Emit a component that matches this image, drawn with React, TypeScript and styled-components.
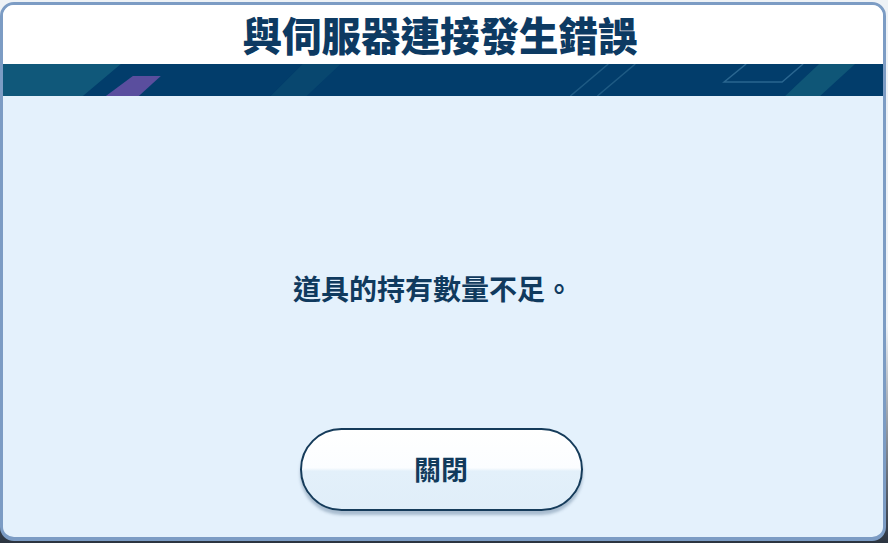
import React from "react";
import styled, {createGlobalStyle} from "styled-components";

const GlobalStyle = createGlobalStyle`
  html, body {
    margin: 0;
    padding: 0;
  }
  body {
    width: 888px;
    height: 543px;
    overflow: hidden;
    background: linear-gradient(#eef2f6 0%, #eef2f6 60%, #2b3440 100%);
    font-family: "Noto Sans CJK TC", "Noto Sans", sans-serif;
  }
`;

const Screen = styled.div`
  padding: 2px 2px 2px 0;
  height: 543px;
  box-sizing: border-box;
`;

const Dialog = styled.div`
  height: 100%;
  box-sizing: border-box;
  border: 3px solid #7c9cc4;
  border-bottom-width: 4px;
  border-radius: 14px;
  overflow: hidden;
  display: flex;
  flex-direction: column;
  background: #e4f1fc;
`;

const Header = styled.header`
  height: 59px;
  background: #ffffff;
  display: flex;
  align-items: center;
  justify-content: center;
`;

const Title = styled.h1`
  margin: 0 6px 0 0;
  font-size: 39.5px;
  font-weight: 900;
  line-height: 1;
  color: #0d3a62;
  padding-bottom: 2px;
`;

const Band = styled.div`
  height: 32px;
  background: #023d6b;
  line-height: 0;

  svg {
    display: block;
    width: 100%;
    height: 100%;
  }
`;

const Body = styled.main`
  flex: 1;
  display: flex;
  flex-direction: column;
  align-items: center;
`;

const MessageArea = styled.div`
  flex: 1;
  display: flex;
  align-items: center;
  justify-content: center;
  padding-top: 52px;
  padding-right: 20px;
`;

const Message = styled.p`
  margin: 0;
  font-size: 28px;
  font-weight: 700;
  color: #103a5e;
  line-height: 1;
`;

const CloseButton = styled.button`
  width: 283px;
  height: 83px;
  margin: 0 4px 26px 0;
  border: 2px solid #153b5a;
  border-radius: 42px;
  background: linear-gradient(#ffffff 0%, #fbfdff 48%, #e3f0fa 52%, #e0eef9 100%);
  box-shadow: 0 4px 3px rgba(80, 110, 140, 0.4);
  font-family: "Noto Sans CJK TC", "Noto Sans", sans-serif;
  font-size: 27px;
  font-weight: 700;
  color: #113a5c;
  cursor: pointer;
  padding: 0 0 2px;
`;

function BandDecor() {
  return (
    <svg viewBox="0 0 881 32" preserveAspectRatio="none">
      <polygon points="0,0 118,0 80,32 0,32" fill="#10587a"/>
      <polygon points="130,12 158,12 136,32 103,32" fill="#5a4e9e"/>
      <polygon points="300,0 338,0 304,32 268,32" fill="#0a4a70" opacity="0.8"/>
      <line x1="568" y1="32" x2="606" y2="0" stroke="#1f5b84" strokeWidth="1.5"/>
      <line x1="595" y1="32" x2="633" y2="0" stroke="#1f5b84" strokeWidth="1.5"/>
      <polyline points="744,0 722,18 780,18 801,0" fill="none" stroke="#2a6690" strokeWidth="1.5"/>
      <polygon points="817,0 853,0 818,32 783,32" fill="#0f5677"/>
    </svg>
  );
}

export default function App() {
  return (
    <Screen>
      <GlobalStyle/>
      <Dialog>
        <Header>
          <Title>與伺服器連接發生錯誤</Title>
        </Header>
        <Band>
          <BandDecor/>
        </Band>
        <Body>
          <MessageArea>
            <Message>道具的持有數量不足。</Message>
          </MessageArea>
          <CloseButton>關閉</CloseButton>
        </Body>
      </Dialog>
    </Screen>
  );
}
